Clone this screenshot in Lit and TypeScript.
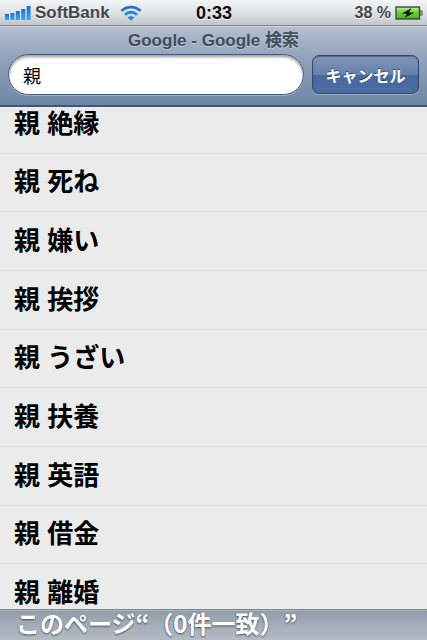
import { LitElement, html, css, svg } from "lit";
import { customElement, property } from "lit/decorators.js";

const SUGGESTIONS = [
  "親 絶縁",
  "親 死ね",
  "親 嫌い",
  "親 挨拶",
  "親 うざい",
  "親 扶養",
  "親 英語",
  "親 借金",
  "親 離婚",
];

@customElement("status-bar")
export class StatusBar extends LitElement {
  @property() carrier = "";
  @property() time = "";
  @property() charge = "";

  static styles = css`
    :host {
      display: grid;
      grid-template-columns: 1fr auto 1fr;
      align-items: center;
      height: 26px;
      box-sizing: border-box;
      padding: 0 4px 0 5px;
      background: linear-gradient(#f3f5f6, #dfe3e5 50%, #c0c6ca);
      border-bottom: 1px solid #7d858e;
      font: bold 17px/26px "Liberation Sans", Arial, sans-serif;
      color: #454749;
      text-shadow: 0 1px 0 rgba(255, 255, 255, 0.7);
      white-space: nowrap;
    }
    .left,
    .right {
      display: flex;
      align-items: center;
    }
    .left {
      gap: 4px;
    }
    .right {
      justify-content: flex-end;
      gap: 4px;
      font-size: 16px;
    }
    .wifi {
      margin-left: 6px;
    }
    .time {
      font-size: 18px;
      color: #0c0c0c;
    }
    svg {
      display: block;
      flex: none;
    }
  `;

  render() {
    return html`
      <div class="left">
        <svg width="26" height="14" viewBox="0 0 26 14" aria-hidden="true">
          <defs>
            <linearGradient id="bar" x1="0" y1="0" x2="0" y2="1">
              <stop offset="0" stop-color="#1f6fd0" />
              <stop offset="1" stop-color="#37a9f6" />
            </linearGradient>
          </defs>
          ${[6, 7, 9, 11, 14].map(
            (h, i) =>
              svg`<rect x=${i * 5.4} y=${14 - h} width="4" height=${h} fill="url(#bar)"/>`
          )}
        </svg>
        <span>${this.carrier}</span>
        <svg class="wifi" width="22" height="16" viewBox="0 0 22 16" aria-hidden="true">
          <defs>
            <linearGradient id="wave" gradientUnits="userSpaceOnUse" x1="0" y1="0" x2="0" y2="16">
              <stop offset="0" stop-color="#2869c8" />
              <stop offset="1" stop-color="#35a0f2" />
            </linearGradient>
          </defs>
          <g fill="none" stroke="url(#wave)" stroke-width="2.8">
            <path d="M1.4 6 A13.6 13.6 0 0 1 20.6 6" />
            <path d="M4.9 9.8 A8.6 8.6 0 0 1 17.1 9.8" />
          </g>
          <path d="M11 15.8 L7.6 12.6 A4.8 4.8 0 0 1 14.4 12.6 Z" fill="#2e86e2" />
        </svg>
      </div>
      <span class="time">${this.time}</span>
      <div class="right">
        <span>${this.charge}</span>
        <svg width="28" height="14" viewBox="0 0 28 14" aria-hidden="true">
          <defs>
            <linearGradient id="cell" x1="0" y1="0" x2="0" y2="1">
              <stop offset="0" stop-color="#c3ee9c" />
              <stop offset=".45" stop-color="#6fd03a" />
              <stop offset="1" stop-color="#43b414" />
            </linearGradient>
          </defs>
          <rect x="1" y="1" width="23.5" height="12" fill="url(#cell)" stroke="#3d4a3a" stroke-width="1.4" />
          <path d="M25.4 4.5 h1 a1 1 0 0 1 1 1 v3 a1 1 0 0 1 -1 1 h-1 z" fill="#8b9095" stroke="#555" stroke-width=".5" />
          <path d="M16.5 2 L7 7.6 L12 8 L9.3 12 L19.2 6.8 L14 6.3 Z" fill="#10160c" />
        </svg>
      </div>
    `;
  }
}

@customElement("search-header")
export class SearchHeader extends LitElement {
  @property() heading = "";
  @property() query = "";

  static styles = css`
    :host {
      display: block;
      box-sizing: border-box;
      height: 81px;
      padding: 0 8px;
      background: linear-gradient(#b3bfcf, #8d9fba 45%, #6e86a6);
      border-top: 1px solid #d3dae3;
      border-bottom: 2px solid #46566c;
      font-family: "Liberation Sans", "Noto Sans CJK JP", sans-serif;
    }
    h1 {
      margin: 0;
      font-size: 17px;
      font-weight: bold;
      line-height: 27px;
      height: 27px;
      text-align: center;
      color: #414b5a;
      text-shadow: 0 1px 0 rgba(255, 255, 255, 0.4);
    }
    form {
      display: flex;
      align-items: center;
      gap: 8px;
    }
    input {
      flex: 1;
      min-width: 0;
      height: 41px;
      box-sizing: border-box;
      padding: 0 14px;
      border: 1px solid #465a7c;
      border-radius: 21px;
      background: #fff;
      box-shadow: inset 0 2px 3px rgba(0, 0, 0, 0.4), 0 1px 0 rgba(255, 255, 255, 0.3);
      font: 18px "Noto Sans CJK JP", sans-serif;
      color: #000;
      outline: none;
    }
    button {
      flex: none;
      width: 107px;
      height: 39px;
      padding: 0;
      border: 1px solid #34496c;
      border-radius: 7px;
      background: linear-gradient(#8297b9, #6480ae 50%, #476a9f 51%, #4a6c9f);
      box-shadow: inset 0 1px 1px rgba(40, 58, 90, 0.5), 0 1px 0 rgba(255, 255, 255, 0.3);
      font: bold 16px "Noto Sans CJK JP", sans-serif;
      color: #fff;
      text-shadow: 0 -1px 0 rgba(0, 0, 0, 0.45);
    }
  `;

  render() {
    return html`
      <h1>${this.heading}</h1>
      <form @submit=${(e: Event) => e.preventDefault()}>
        <input type="text" aria-label="検索" .value=${this.query} />
        <button type="button">キャンセル</button>
      </form>
    `;
  }
}

@customElement("app-root")
export class AppRoot extends LitElement {
  static styles = css`
    :host {
      display: flex;
      flex-direction: column;
      min-height: 100vh;
      background: #ebebeb;
      font-family: "Noto Sans CJK JP", sans-serif;
    }
    main {
      flex: 1;
      display: flex;
      overflow: hidden;
    }
    /* The list is scrolled part of a row past the header. */
    ul {
      flex: 1;
      display: grid;
      grid-auto-rows: 1fr;
      margin: -12px 0 -14px;
      padding: 0;
      list-style: none;
    }
    li {
      display: flex;
      align-items: center;
      box-sizing: border-box;
      padding: 0 14px;
      border-bottom: 1px solid #dcdcdc;
      font-family: "Liberation Sans", "Noto Sans CJK JP", sans-serif;
      font-size: 26px;
      font-weight: bold;
      line-height: 30px;
      color: #000;
    }
    footer {
      box-sizing: border-box;
      height: 31px;
      padding: 0 16px;
      background: linear-gradient(#8f9ba8, #a4aeb9 50%, #b3bbc4);
      border-top: 1px solid #7f8b98;
      box-shadow: inset 0 1px 0 #a9b4bf;
      font-size: 24px;
      font-weight: bold;
      line-height: 26px;
      text-spacing-trim: space-all;
      color: #fff;
      text-shadow: 0 1px 2px rgba(50, 58, 68, 0.8);
      white-space: nowrap;
    }
  `;

  render() {
    return html`
      <status-bar carrier="SoftBank" time="0:33" charge="38 %"></status-bar>
      <search-header heading="Google - Google 検索" query="親"></search-header>
      <main>
        <ul>
          ${SUGGESTIONS.map((s) => html`<li>${s}</li>`)}
        </ul>
      </main>
      <footer>このページ“（0件一致）”</footer>
    `;
  }
}
